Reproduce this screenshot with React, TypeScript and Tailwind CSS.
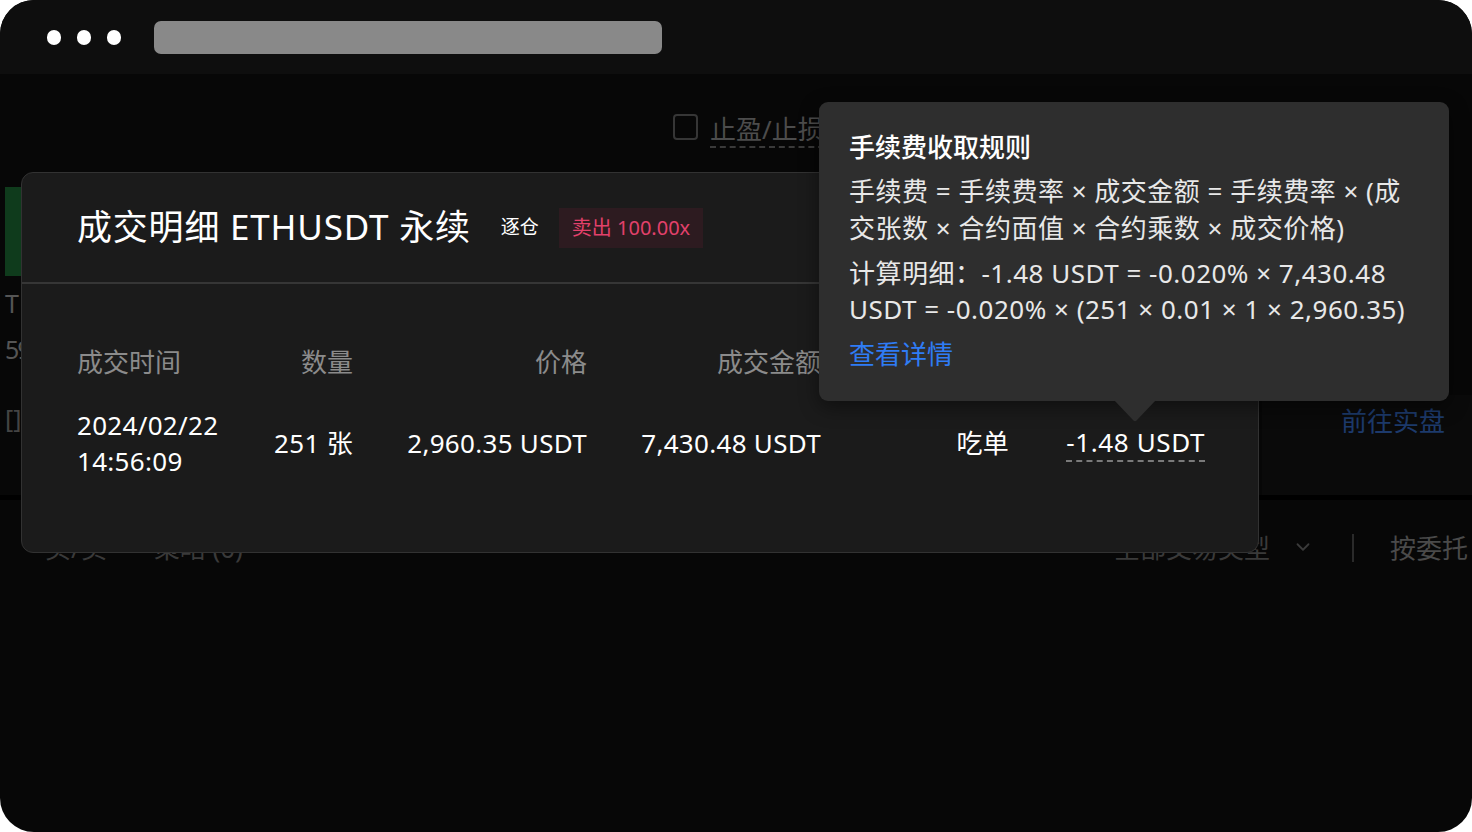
import { ChevronDown } from "lucide-react";

const font = { fontFamily: '"Noto Sans", "Noto Sans CJK SC", sans-serif' };

const TradeDetailModal = () => {
  return (
    <div className="absolute left-[21px] top-[98px] w-[1238px] h-[381px] bg-[#1b1b1b] border border-[#323232] rounded-[12px] z-10">
      <div className="h-[111px] flex items-center px-[55px] border-b-2 border-[#363636]">
        <span className="text-[35px] text-white leading-none tracking-[0.8px] -mt-[2px]">成交明细 ETHUSDT 永续</span>
        <span className="ml-[30px] text-[19px] text-white">逐仓</span>
        <span className="ml-[20px] h-[40px] px-[13px] flex items-center bg-[#2d1b20] text-[20px] text-[#e2416b]">
          卖出 100.00x
        </span>
      </div>
      <div className="px-[55px] pt-[60px]">
        <div className="grid grid-cols-[153px_123px_234px_234px_188px_196px] text-[26px] leading-[36px] text-[#8b8b8b]">
          <div>成交时间</div>
          <div className="text-right">数量</div>
          <div className="text-right">价格</div>
          <div className="text-right">成交金额</div>
          <div className="text-right">类型</div>
          <div className="text-right">手续费</div>
        </div>
        <div className="mt-[27px] grid grid-cols-[153px_123px_234px_234px_188px_196px] items-center text-[26px] leading-[36px] tracking-[0.3px] text-white">
          <div>
            <div>2024/02/22</div>
            <div>14:56:09</div>
          </div>
          <div className="text-right">251 张</div>
          <div className="text-right">2,960.35 USDT</div>
          <div className="text-right">7,430.48 USDT</div>
          <div className="text-right">吃单</div>
          <div className="flex justify-end">
            <span className="border-b-2 border-dashed border-[#7a7a7a] leading-[36px] tracking-[0.6px]">-1.48 USDT</span>
          </div>
        </div>
      </div>
    </div>
  );
};

const FeeTooltip = () => {
  return (
    <div className="absolute left-[819px] top-[28px] w-[630px] h-[299px] bg-[#2e2e2e] rounded-[9px] z-20 px-[30px] pt-[27px] text-[#e8e8e8] whitespace-nowrap shadow-[0_6px_20px_rgba(0,0,0,0.45)]">
      <div className="text-[26px] leading-[36px] font-medium text-white">手续费收取规则</div>
      <div className="mt-[8px] text-[26px] leading-[37px] tracking-[0.5px]">
        <div>手续费 = 手续费率 × 成交金额 = 手续费率 × (成</div>
        <div>交张数 × 合约面值 × 合约乘数 × 成交价格)</div>
      </div>
      <div className="mt-[8px] text-[26px] leading-[36px] tracking-[0.5px]">
        <div>计算明细：-1.48 USDT = -0.020% × 7,430.48</div>
        <div>USDT = -0.020% × (251 × 0.01 × 1 × 2,960.35)</div>
      </div>
      <div className="mt-[9px] text-[26px] leading-[36px] text-[#2f7cf5]">查看详情</div>
      <svg className="absolute left-[295px] top-[298px]" width="42" height="22" viewBox="0 0 42 22">
        <path d="M0 0 L42 0 L22.5 20.5 Q21 22 19.5 20.5 Z" fill="#2e2e2e" />
      </svg>
    </div>
  );
};

export default function App() {
  return (
    <div className="w-[1472px] h-[832px] bg-white" style={font}>
      <div className="relative w-full h-full rounded-[34px] overflow-hidden bg-[#070707] flex flex-col">
        <div className="h-[74px] shrink-0 bg-[#0e0e0e] flex items-center pl-[47px]">
          <div className="flex gap-[16px]">
            <span className="w-[14px] h-[15px] rounded-full bg-white" />
            <span className="w-[14px] h-[15px] rounded-full bg-white" />
            <span className="w-[14px] h-[15px] rounded-full bg-white" />
          </div>
          <div className="ml-[33px] w-[508px] h-[33px] rounded-[7px] bg-[#898989]" />
        </div>

        <div className="relative flex-1 flex flex-col">
          {/* background trading page, dimmed behind the modal */}
          <div className="h-[96px] shrink-0 pt-[40px] pl-[673px] flex items-start">
            <span className="w-[25px] h-[26px] border-2 border-[#363636] rounded-[4px]" />
            <span className="ml-[12px] -mt-[2px] text-[26px] leading-[34px] text-[#4c4c4c] border-b-2 border-dashed border-[#3a3a3a] pr-[10px]">
              止盈/止损
            </span>
          </div>
          <div className="h-[325px] shrink-0 flex">
            <div className="w-[21px] pl-[5px] pt-[17px] flex flex-col text-[25px] text-[#555] leading-[36px]">
              <div className="w-[16px] h-[89px] bg-[#0f3b1c]" />
              <div className="mt-[9px]">T</div>
              <div className="mt-[10px] tracking-[-2px]">59</div>
              <div className="mt-[33px] text-[#444]">[]</div>
            </div>
            <div className="flex-1" />
            <div className="w-[210px] flex flex-col">
              <div className="h-[225px]" />
              <div className="flex-1 bg-[#0a0a0a] flex justify-end pr-[27px] pt-[8px]">
                <span className="text-[26px] leading-[36px] text-[#1d3a6c]">前往实盘</span>
              </div>
            </div>
          </div>
          <div className="h-[5px] shrink-0 bg-black" />
          <div className="h-[66px] shrink-0 flex items-end text-[26px] leading-[36px] text-[#3a3a3a]">
            <span className="ml-[45px]">买/卖</span>
            <span className="ml-[47px]">策略 (0)</span>
            <span className="ml-auto">全部交易类型</span>
            <ChevronDown className="ml-[22px] mb-[8px] text-[#3a3a3a]" size={22} strokeWidth={2} />
            <span className="ml-[38px] mb-[4px] w-[2px] h-[28px] bg-[#2a2a2a]" />
            <span className="ml-[36px] mr-[4px] text-[#4a4a4a]">按委托</span>
          </div>

          <TradeDetailModal />
          <FeeTooltip />
        </div>
      </div>
    </div>
  );
}
